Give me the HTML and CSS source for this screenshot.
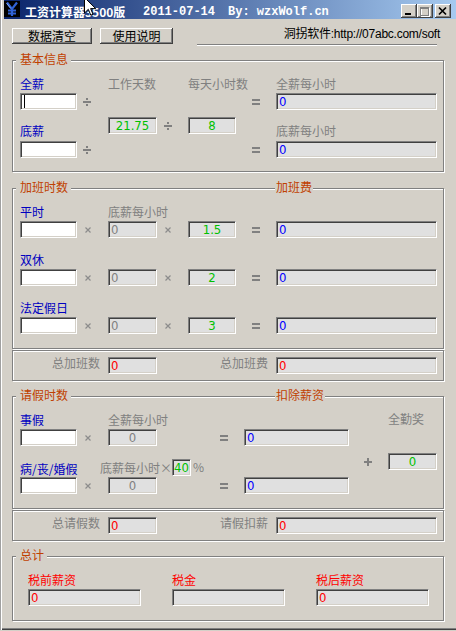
FILE: index.html
```html
<!DOCTYPE html>
<html lang="zh-CN">
<head>
<meta charset="utf-8">
<title>工资计算器3500版</title>
<link rel="stylesheet" href="styles.css">
</head>
<body>
<div class="window">
  <header class="titlebar">
    <svg class="appicon" width="16" height="16" viewBox="0 0 16 16" aria-hidden="true">
      <rect width="16" height="16" fill="#000"/>
      <path d="M3 1.5 L8 8 L13 1.5 M8 8 V15 M4 9.5 H12 M4 12.5 H12" stroke="#2f62d6" stroke-width="2.2" fill="none"/>
      <path d="M2.6 2.2 L6.6 7.4" stroke="#9fc0ff" stroke-width="0.8" fill="none"/>
    </svg>
    <span class="t-name">工资计算器3500版</span>
    <span class="t-date">2011-07-14</span>
    <span class="t-by">By: wzxWolf.cn</span>
    <div class="capbtns">
      <span class="capbtn"><svg width="16" height="14" viewBox="0 0 16 14"><rect x="4" y="9" width="6" height="2" fill="#000"/></svg></span>
      <span class="capbtn"><svg width="16" height="14" viewBox="0 0 16 14"><rect x="4.5" y="4.5" width="8" height="8" fill="none" stroke="#fff"/><rect x="3.5" y="3.5" width="8" height="8" fill="none" stroke="#808080"/><rect x="3" y="3" width="9" height="2" fill="#808080"/></svg></span>
      <span class="capbtn close"><svg width="16" height="14" viewBox="0 0 16 14"><path d="M4 3.5 L11 10.5 M11 3.5 L4 10.5" stroke="#000" stroke-width="1.7" fill="none"/></svg></span>
    </div>
    <svg class="cursor" width="13" height="20" viewBox="0 0 13 20" aria-hidden="true">
      <path d="M0.5 0.5 V16 L4.3 12.3 L6.8 18.2 L9 17.2 L6.6 11.6 H11.7 Z" fill="#fff" stroke="#000"/>
    </svg>
  </header>

  <main class="client">
    <div class="toolbar">
      <button class="btn w80">数据清空</button>
      <button class="btn w73">使用说明</button>
      <span class="link">洞拐软件:http://07abc.com/soft</span>
    </div>
    <div class="sep"></div>

    <section class="group g1">
      <span class="legend">基本信息</span>
      <div class="grid rows-g1">
        <span class="lbl blue c1 r1">全薪</span>
        <span class="lbl gray c3 r1">工作天数</span>
        <span class="lbl gray c5 r1">每天小时数</span>
        <span class="lbl gray c7 r1">全薪每小时</span>

        <div class="fld edit c1 r2"><i class="caret"></i></div>
        <svg class="op ml6 c2 r2" width="8" height="8" viewBox="0 0 8 8"><path d="M3 0h2v2H3zM0 3h8v2H0zM3 6h2v2H3z" fill="#808080"/></svg>
        <svg class="op ml16 c6 r2" width="8" height="6" viewBox="0 0 8 6"><path d="M0 0h8v2H0zM0 4h8v2H0z" fill="#808080"/></svg>
        <div class="fld ro t-blue c7 r2">0</div>

        <div class="fld ro t-green center c3 r34 mt7">21.75</div>
        <svg class="op ml7 c4 r34 mt12" width="8" height="8" viewBox="0 0 8 8"><path d="M3 0h2v2H3zM0 3h8v2H0zM3 6h2v2H3z" fill="#808080"/></svg>
        <div class="fld ro t-green center c5 r34 mt7">8</div>

        <span class="lbl blue c1 r4">底薪</span>
        <span class="lbl gray c7 r4">底薪每小时</span>

        <div class="fld edit c1 r5"></div>
        <svg class="op ml6 c2 r5" width="8" height="8" viewBox="0 0 8 8"><path d="M3 0h2v2H3zM0 3h8v2H0zM3 6h2v2H3z" fill="#808080"/></svg>
        <svg class="op ml16 c6 r5" width="8" height="6" viewBox="0 0 8 6"><path d="M0 0h8v2H0zM0 4h8v2H0z" fill="#808080"/></svg>
        <div class="fld ro t-blue c7 r5">0</div>
      </div>
    </section>

    <section class="group g2">
      <span class="legend">加班时数</span>
      <span class="legend right">加班费</span>
      <div class="grid rows-g2">
        <span class="lbl blue c1 r1">平时</span>
        <span class="lbl gray c3 r1">底薪每小时</span>
        <div class="fld edit c1 r2"></div>
        <svg class="op ml8 c2 r2" width="6" height="6" viewBox="0 0 6 6"><path d="M0.5 0.5L5.5 5.5M5.5 0.5L0.5 5.5" stroke="#8c8c8c" stroke-width="1.2"/></svg>
        <div class="fld ro t-gray c3 r2">0</div>
        <svg class="op ml8 c4 r2" width="6" height="6" viewBox="0 0 6 6"><path d="M0.5 0.5L5.5 5.5M5.5 0.5L0.5 5.5" stroke="#8c8c8c" stroke-width="1.2"/></svg>
        <div class="fld ro t-green center c5 r2">1.5</div>
        <svg class="op ml16 c6 r2" width="8" height="6" viewBox="0 0 8 6"><path d="M0 0h8v2H0zM0 4h8v2H0z" fill="#808080"/></svg>
        <div class="fld ro t-blue c7 r2">0</div>

        <span class="lbl blue c1 r4">双休</span>
        <div class="fld edit c1 r5"></div>
        <svg class="op ml8 c2 r5" width="6" height="6" viewBox="0 0 6 6"><path d="M0.5 0.5L5.5 5.5M5.5 0.5L0.5 5.5" stroke="#8c8c8c" stroke-width="1.2"/></svg>
        <div class="fld ro t-gray c3 r5">0</div>
        <svg class="op ml8 c4 r5" width="6" height="6" viewBox="0 0 6 6"><path d="M0.5 0.5L5.5 5.5M5.5 0.5L0.5 5.5" stroke="#8c8c8c" stroke-width="1.2"/></svg>
        <div class="fld ro t-green center c5 r5">2</div>
        <svg class="op ml16 c6 r5" width="8" height="6" viewBox="0 0 8 6"><path d="M0 0h8v2H0zM0 4h8v2H0z" fill="#808080"/></svg>
        <div class="fld ro t-blue c7 r5">0</div>

        <span class="lbl blue c1 r7">法定假日</span>
        <div class="fld edit c1 r8"></div>
        <svg class="op ml8 c2 r8" width="6" height="6" viewBox="0 0 6 6"><path d="M0.5 0.5L5.5 5.5M5.5 0.5L0.5 5.5" stroke="#8c8c8c" stroke-width="1.2"/></svg>
        <div class="fld ro t-gray c3 r8">0</div>
        <svg class="op ml8 c4 r8" width="6" height="6" viewBox="0 0 6 6"><path d="M0.5 0.5L5.5 5.5M5.5 0.5L0.5 5.5" stroke="#8c8c8c" stroke-width="1.2"/></svg>
        <div class="fld ro t-green center c5 r8">3</div>
        <svg class="op ml16 c6 r8" width="8" height="6" viewBox="0 0 8 6"><path d="M0 0h8v2H0zM0 4h8v2H0z" fill="#808080"/></svg>
        <div class="fld ro t-blue c7 r8">0</div>
      </div>
    </section>

    <section class="group tot t1">
      <div class="grid rows-t">
        <span class="lbl gray c12 tl">总加班数</span>
        <div class="fld ro t-red c3 r1">0</div>
        <span class="lbl gray c46 tl">总加班费</span>
        <div class="fld ro t-red c7 r1">0</div>
      </div>
    </section>

    <section class="group g3">
      <span class="legend">请假时数</span>
      <span class="legend right">扣除薪资</span>
      <div class="grid leave rows-g3">
        <span class="lbl blue c1 r1">事假</span>
        <span class="lbl gray c3 r1">全薪每小时</span>
        <span class="lbl gray c7 r1 mtn1">全勤奖</span>

        <div class="fld edit c1 r2"></div>
        <svg class="op ml8 c2 r2" width="6" height="6" viewBox="0 0 6 6"><path d="M0.5 0.5L5.5 5.5M5.5 0.5L0.5 5.5" stroke="#8c8c8c" stroke-width="1.2"/></svg>
        <div class="fld ro t-gray center c3 r2">0</div>
        <svg class="op ml63 c4 r2" width="8" height="6" viewBox="0 0 8 6"><path d="M0 0h8v2H0zM0 4h8v2H0z" fill="#808080"/></svg>
        <div class="fld ro t-blue c5 r2">0</div>

        <span class="lbl blue c1 r3 mt16">病/丧/婚假</span>
        <div class="rate c25 r3">
          <span class="lbl gray rate-text">底薪每小时×</span>
          <div class="fld ro t-green center w19">40</div>
          <span class="lbl gray pct">%</span>
        </div>
        <svg class="op ml15 c6 r3 mt12" width="8" height="8" viewBox="0 0 8 8"><path d="M3 0h2v8H3zM0 3h8v2H0z" fill="#808080"/></svg>
        <div class="fld ro t-green center c7 r3 mt7">0</div>

        <div class="fld edit c1 r4"></div>
        <svg class="op ml8 c2 r4" width="6" height="6" viewBox="0 0 6 6"><path d="M0.5 0.5L5.5 5.5M5.5 0.5L0.5 5.5" stroke="#8c8c8c" stroke-width="1.2"/></svg>
        <div class="fld ro t-gray center c3 r4">0</div>
        <svg class="op ml63 c4 r4" width="8" height="6" viewBox="0 0 8 6"><path d="M0 0h8v2H0zM0 4h8v2H0z" fill="#808080"/></svg>
        <div class="fld ro t-blue c5 r4">0</div>
      </div>
    </section>

    <section class="group tot t2">
      <div class="grid rows-t">
        <span class="lbl gray c12 tl">总请假数</span>
        <div class="fld ro t-red c3 r1">0</div>
        <span class="lbl gray c46 tl">请假扣薪</span>
        <div class="fld ro t-red c7 r1">0</div>
      </div>
    </section>

    <section class="group g4">
      <span class="legend">总计</span>
      <div class="sum-grid">
        <span class="lbl red">税前薪资</span>
        <span class="lbl red">税金</span>
        <span class="lbl red">税后薪资</span>
        <div class="fld ro t-red">0</div>
        <div class="fld ro t-red"></div>
        <div class="fld ro t-red">0</div>
      </div>
    </section>
  </main>
</div>
</body>
</html>
```

FILE: styles.css
```css
* { box-sizing: border-box; }

html, body {
  margin: 0;
  padding: 0;
  background: #d4d0c8;
}

body {
  font-family: "Noto Sans CJK SC", sans-serif;
  font-size: 12px;
  color: #000;
}

.window {
  position: relative;
  width: 456px;
  height: 630px;
  padding-left: 4px;
  background: #d4d0c8;
  display: flex;
  flex-direction: column;
  box-shadow: inset 1px 0 0 #a0a0a0, inset 2px 0 0 #fff,
              inset 0 -1px 0 #404040, inset 0 -2px 0 #808080;
}

/* ---------- title bar ---------- */
.titlebar {
  position: relative;
  flex: none;
  height: 19px;
  display: flex;
  align-items: flex-start;
  background: linear-gradient(to right, #0a246a, #a6caf0);
  color: #fff;
}

.appicon {
  display: block;
  flex: none;
  margin-top: 1px;
}

.t-name {
  margin: 5px 0 0 5px;
  width: 118px;
  flex: none;
  font-weight: 700;
  line-height: 14px;
  white-space: nowrap;
}

.t-date,
.t-by {
  margin-top: 5px;
  flex: none;
  font-family: "Liberation Mono", monospace;
  font-weight: 700;
  font-size: 12px;
  line-height: 14px;
  white-space: nowrap;
}

.t-date { width: 85px; }

.capbtns {
  display: flex;
  margin: 4px 5px 0 auto;
}

.capbtn {
  display: block;
  width: 16px;
  height: 14px;
  background: #d4d0c8;
  box-shadow: inset -1px -1px 0 #404040, inset 1px 1px 0 #fff, inset -2px -2px 0 #808080;
}

.capbtn svg { display: block; }
.capbtn.close { margin-left: 2px; }

.cursor {
  position: absolute;
  left: 80px;
  top: -3px;
}

/* ---------- client ---------- */
.client {
  flex: 1;
  display: flex;
  flex-direction: column;
}

.toolbar {
  flex: none;
  height: 25px;
  padding-top: 9px;
  display: flex;
  align-items: flex-start;
}

.btn {
  -webkit-appearance: none;
  appearance: none;
  margin: 0 0 0 8px;
  padding: 0;
  border: 0;
  height: 16px;
  background: #d4d0c8;
  font-family: "Noto Sans CJK SC", sans-serif;
  font-size: 12px;
  line-height: 16px;
  color: #000;
  box-shadow: inset -1px -1px 0 #404040, inset 1px 1px 0 #fff, inset -2px -2px 0 #808080;
}

.w80 { width: 80px; }
.w73 { width: 73px; }

.link {
  margin: -2px 16px 0 auto;
  line-height: 16px;
  font-family: "Liberation Sans", "Noto Sans CJK SC", sans-serif;
  font-size: 12px;
  letter-spacing: -0.25px;
  white-space: nowrap;
}

.sep {
  flex: none;
  margin-left: 193px;
  width: 240px;
  height: 2px;
  border-top: 1px solid #808080;
  border-bottom: 1px solid #fff;
}

/* ---------- group boxes ---------- */
.group {
  position: relative;
  flex: none;
  width: 432px;
  margin-left: 8px;
  border: 1px solid #808080;
  box-shadow: inset 1px 1px 0 #fff, 1px 1px 0 #fff;
  padding: 16px 0 14px 7px;
}

.legend {
  position: absolute;
  top: -9px;
  left: 3px;
  padding: 0 3px 0 4px;
  background: #d4d0c8;
  color: #c04000;
  line-height: 14px;
  white-space: nowrap;
}

.legend.right {
  left: 262px;
  padding: 0 1px;
}

.g1 { margin-top: 14px; padding-bottom: 13px; }
.g2 { margin-top: 16px; }
.g3 { margin-top: 15px; }
.g4 { margin-top: 15px; padding-left: 15px; }
.tot { margin-top: 1px; padding: 6px 0 6px 7px; }

/* ---------- grids ---------- */
.grid {
  display: grid;
  grid-template-columns: 57px 31px 49px 31px 48px 40px 161px;
  align-items: start;
}

.grid.leave {
  grid-template-columns: 57px 31px 49px 87px 105px 39px 49px;
}

.rows-g1 { grid-template-rows: 16px 17px 14px 17px 17px; }
.rows-g2 { grid-template-rows: 16px 17px 15px 16px 17px 15px 16px 17px; }
.rows-g3 { grid-template-rows: 16px 17px 31px 17px; }
.rows-t  { grid-template-rows: 17px; }

.sum-grid {
  display: grid;
  grid-template-columns: repeat(3, 113px);
  grid-template-rows: 16px 17px;
  column-gap: 31px;
  align-items: start;
}

.c1 { grid-column: 1; }
.c2 { grid-column: 2; }
.c3 { grid-column: 3; }
.c4 { grid-column: 4; }
.c5 { grid-column: 5; }
.c6 { grid-column: 6; }
.c7 { grid-column: 7; }
.c12 { grid-column: 1 / 3; grid-row: 1; }
.c46 { grid-column: 4 / 7; grid-row: 1; }
.c25 { grid-column: 2 / 5; }

.r1 { grid-row: 1; }
.r2 { grid-row: 2; }
.r3 { grid-row: 3; }
.r4 { grid-row: 4; }
.r5 { grid-row: 5; }
.r7 { grid-row: 7; }
.r8 { grid-row: 8; }
.r34 { grid-row: 3 / 5; }

.mt7 { margin-top: 7px; }
.mt12 { margin-top: 12px; }
.mt16 { margin-top: 16px; }
.mtn1 { margin-top: -1px; }

/* ---------- labels ---------- */
.lbl {
  line-height: 14px;
  white-space: nowrap;
}

.blue { color: #0000c0; }
.gray { color: #808080; }
.red  { color: #ff0000; }

.tl {
  text-align: right;
  padding-right: 8px;
  margin-top: -1px;
}

/* ---------- operators ---------- */
.op {
  display: block;
  align-self: center;
  justify-self: start;
}

.ml6 { margin-left: 6px; }
.ml7 { margin-left: 7px; }
.ml8 { margin-left: 8px; }
.ml15 { margin-left: 15px; }
.ml16 { margin-left: 16px; }
.ml63 { margin-left: 63px; }

.op.mt12 { align-self: start; }

/* ---------- fields ---------- */
.fld {
  height: 17px;
  border: 1px solid;
  border-color: #808080 #fff #fff #808080;
  box-shadow: inset 1px 1px 0 #404040, inset -1px -1px 0 #d4d0c8;
  padding: 0 2px;
  font-family: "Liberation Sans Narrow", "DejaVu Sans Condensed", "Liberation Sans", sans-serif;
  font-size: 13px;
  line-height: 15px;
  white-space: nowrap;
  overflow: hidden;
}

.edit { background: #fff; }
.ro { background: #e0e0e0; }

.center { text-align: center; }

.t-blue  { color: #0000ff; }
.t-red   { color: #ff0000; }
.t-green { color: #00c000; }
.t-gray  { color: #808080; }

.caret {
  display: inline-block;
  vertical-align: top;
  width: 1px;
  height: 13px;
  margin: 1px 0 0 1px;
  background: #000;
}

/* rate row (sick/bereavement/marriage leave) */
.rate {
  display: flex;
  align-items: flex-start;
  margin-top: 13px;
  padding-left: 23px;
  height: 17px;
}

.rate-text {
  width: 72px;
  margin-top: 2px;
  flex: none;
}

.w19 {
  width: 19px;
  flex: none;
  padding: 0;
}

.pct {
  margin: 1px 0 0 2px;
}
```
